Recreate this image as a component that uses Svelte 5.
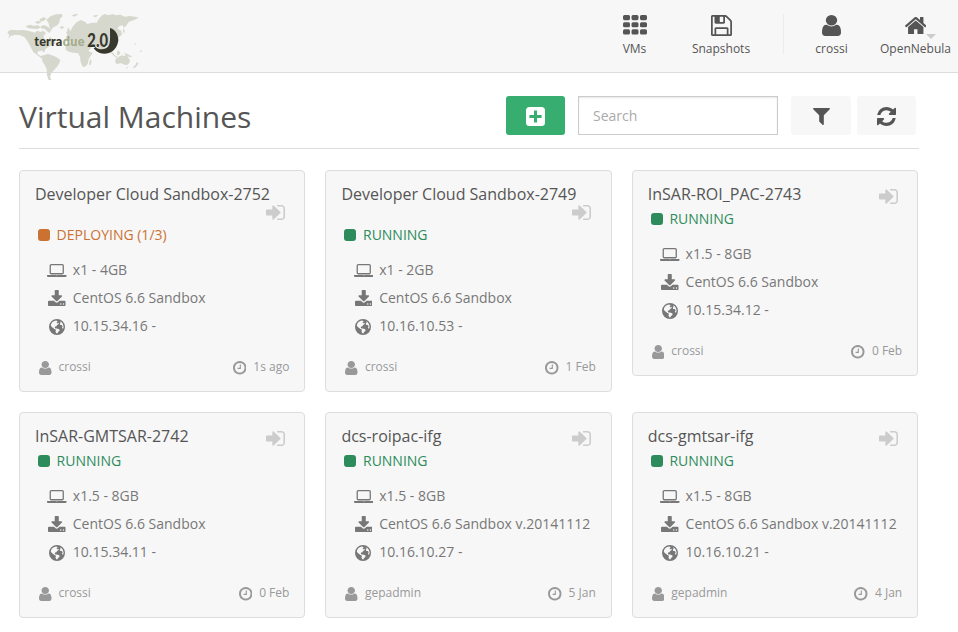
<script>
  const icons = {
    user: {
      box: '256 128 1280 1536',
      d: 'M1536 1399q0 109-62.5 187t-150.5 78h-854q-88 0-150.5-78t-62.5-187q0-85 8.5-160.5t31.5-152 58.5-131 94-89 134.5-34.5q131 128 313 128t313-128q76 0 134.5 34.5t94 89 58.5 131 31.5 152 8.5 160.5zm-256-887q0 159-112.5 271.5t-271.5 112.5-271.5-112.5-112.5-271.5 112.5-271.5 271.5-112.5 271.5 112.5 112.5 271.5z'
    },
    grid: {
      box: '0 0 24 19',
      d: 'M1.5 0h4q1.500 0 1.500 1.500v2q0 1.500-1.500 1.500h-4q-1.500 0-1.500-1.500v-2q0-1.500 1.500-1.500zM10 0h4q1.500 0 1.500 1.500v2q0 1.500-1.500 1.500h-4q-1.500 0-1.500-1.500v-2q0-1.500 1.500-1.500zM18.500 0h4q1.500 0 1.500 1.500v2q0 1.500-1.500 1.500h-4q-1.500 0-1.500-1.500v-2q0-1.500 1.500-1.500zM1.500 7h4q1.500 0 1.500 1.500v2q0 1.500-1.500 1.500h-4q-1.500 0-1.500-1.500v-2q0-1.500 1.500-1.500zM10 7h4q1.500 0 1.500 1.500v2q0 1.500-1.500 1.500h-4q-1.500 0-1.500-1.500v-2q0-1.500 1.500-1.500zM18.500 7h4q1.500 0 1.500 1.500v2q0 1.500-1.500 1.500h-4q-1.500 0-1.500-1.500v-2q0-1.500 1.500-1.500zM1.500 14h4q1.500 0 1.500 1.500v2q0 1.500-1.500 1.500h-4q-1.500 0-1.500-1.500v-2q0-1.500 1.500-1.500zM10 14h4q1.500 0 1.500 1.500v2q0 1.500-1.500 1.500h-4q-1.500 0-1.500-1.500v-2q0-1.500 1.500-1.500zM18.500 14h4q1.500 0 1.500 1.500v2q0 1.500-1.500 1.500h-4q-1.500 0-1.500-1.500v-2q0-1.500 1.500-1.500z'
    },
    save: {
      box: '128 128 1536 1536',
      d: 'M512 1536h768v-384h-768v384zm896 0h128v-896q0-14-10-38.5t-20-34.5l-281-281q-10-10-34-20t-39-10v416q0 40-28 68t-68 28h-576q-40 0-68-28t-28-68v-416h-128v1280h128v-416q0-40 28-68t68-28h832q40 0 68 28t28 68v416zm-384-928v-320q0-13-9.5-22.5t-22.5-9.5h-192q-13 0-22.5 9.5t-9.5 22.5v320q0 13 9.5 22.5t22.5 9.5h192q13 0 22.5-9.500t9.500-22.500zm640 32v928q0 40-28 68t-68 28h-1344q-40 0-68-28t-28-68v-1344q0-40 28-68t68-28h928q40 0 88 20t76 48l280 280q28 28 48 76t20 88z'
    },
    home: {
      box: '89 256 1614 1280',
      d: 'M1472 992v480q0 26-19 45t-45 19h-384v-384h-256v384h-384q-26 0-45-19t-19-45v-480q0-1 .5-3t.5-3l575-474 575 474q1 2 1 6zm223-69l-62 74q-8 9-21 11h-3q-13 0-21-7l-692-577-692 577q-12 8-24 7-13-2-21-11l-62-74q-8-10-7-23.5t11-21.5l719-599q32-26 76-26t76 26l244 204v-195q0-14 9-23t23-9h192q14 0 23 9t9 23v408l219 182q10 8 11 21.5t-7 23.5z'
    },
    plus: {
      box: '0 0 19 19',
      d: 'M3.500 0h12q3.500 0 3.500 3.500v12q0 3.500-3.500 3.500h-12q-3.500 0-3.500-3.500v-12q0-3.500 3.500-3.500zM8 3.400v4.600h-4.600v3h4.600v4.600h3v-4.600h4.600v-3h-4.600v-4.600z'
    },
    filter: {
      box: '191 256 1410 1408',
      d: 'M1595 295q17 41-14 70l-493 493v742q0 42-39 59-13 5-25 5-27 0-45-19l-256-256q-19-19-19-45v-486l-493-493q-31-29-14-70 17-39 59-39h1280q42 0 59 39z'
    },
    refresh: {
      box: '128 128 1536 1536',
      d: 'M1639 1056q0 5-1 7-64 268-268 434.500t-478 166.500q-146 0-282.500-55t-243.500-157l-129 129q-19 19-45 19t-45-19-19-45v-448q0-26 19-45t45-19h448q26 0 45 19t19 45-19 45l-137 137q71 66 161 102t187 36q134 0 250-65t186-179q11-17 53-117 8-23 30-23h192q13 0 22.500 9.500t9.500 22.500zm25-800v448q0 26-19 45t-45 19h-448q-26 0-45-19t-19-45 19-45l138-138q-148-137-349-137-134 0-250 65t-186 179q-11 17-53 117-8 23-30 23h-199q-13 0-22.500-9.500t-9.500-22.500v-7q65-268 270-434.500t480-166.500q146 0 284 55.500t245 156.500l130-129q19-19 45-19t45 19 19 45z'
    },
    signin: {
      box: '128 256 1536 1280',
      d: 'M1312 896q0 26-19 45l-544 544q-19 19-45 19t-45-19-19-45v-288h-448q-26 0-45-19t-19-45v-384q0-26 19-45t45-19h448v-288q0-26 19-45t45-19 45 19l544 544q19 19 19 45zm352-352v704q0 119-84.500 203.500t-203.500 84.500h-320q-13 0-22.500-9.500t-9.500-22.500q0-4-1-20t-.5-26.500 3-23.500 10-19.500 20.500-6.500h320q66 0 113-47t47-113v-704q0-66-47-113t-113-47h-312l-11.500-1-11.500-3-8-5.500-7-9-2-13.500q0-4-1-20t-.5-26.500 3-23.500 10-19.500 20.500-6.500h320q119 0 203.500 84.500t84.500 203.500z'
    },
    laptop: {
      box: '0 256 1920 1280',
      d: 'M416 1280q-66 0-113-47t-47-113v-704q0-66 47-113t113-47h1088q66 0 113 47t47 113v704q0 66-47 113t-113 47h-1088zm-32-864v704q0 13 9.500 22.500t22.500 9.500h1088q13 0 22.500-9.500t9.500-22.500v-704q0-13-9.500-22.500t-22.500-9.500h-1088q-13 0-22.500 9.500t-9.500 22.500zm1376 928h160v96q0 40-47 68t-113 28h-1600q-66 0-113-28t-47-68v-96h1760zm-720 96q16 0 16-16t-16-16h-160q-16 0-16 16t16 16h160z'
    },
    download: {
      box: '64 0 1664 1536',
      d: 'M1344 1344q0-26-19-45t-45-19-45 19-19 45 19 45 45 19 45-19 19-45zm256 0q0-26-19-45t-45-19-45 19-19 45 19 45 45 19 45-19 19-45zm128-224v320q0 40-28 68t-68 28h-1472q-40 0-68-28t-28-68v-320q0-40 28-68t68-28h465l135 136q58 56 136 56t136-56l136-136h464q40 0 68 28t28 68zm-325-569q17 41-14 70l-448 448q-18 19-45 19t-45-19l-448-448q-31-29-14-70 17-39 59-39h256v-448q0-26 19-45t45-19h256q26 0 45 19t19 45v448h256q42 0 59 39z'
    },
    globe: {
      box: '0 0 16 16',
      d: 'M8 0A8 8 0 1 1 8 16A8 8 0 1 1 8 0zM7.300 1.400L5.200 2.100 3.200 3.300 2 5.200 1.900 6.800 3 8.300 4.300 8.900 5.200 10.100 6.400 10.300 6.900 11.500 6.400 12.600 7.400 14.300 8.300 14.500 9.100 13.100 10.400 12 10.500 10.600 8.900 9.800 7.500 9.400 6.400 9.600 5.700 8.600 6.200 7.500 7.500 7.300 7.900 6.200 9.200 5.200 10 4.300 9 3.800 8.300 4.600 7.500 3.800 8.700 2.600zM11.200 2.300L11.600 3.600 10.800 5 11.300 6.100 12.800 5.900 13.700 7.200 13 8.600 13.500 9.700 14.300 9.300 14.600 7.500 13.900 5.100 12.700 3.300z'
    },
    clock: {
      box: '128 128 1536 1536',
      d: 'M1024 544v448q0 14-9 23t-23 9h-320q-14 0-23-9t-9-23v-64q0-14 9-23t23-9h224v-352q0-14 9-23t23-9h64q14 0 23 9t9 23zm416 352q0-148-73-273t-198-198-273-73-273 73-198 198-73 273 73 273 198 198 273 73 273-73 198-198 73-273zm224 0q0 209-103 385.500t-279.500 279.500-385.500 103-385.500-103-279.500-279.500-103-385.500 103-385.500 279.500-279.500 385.500-103 385.500 103 279.500 279.500 103 385.500z'
    }
  };

  const machines = [
    { name: 'Developer Cloud Sandbox-2752', state: 'DEPLOYING (1/3)', busy: true, size: 'x1 - 4GB', image: 'CentOS 6.6 Sandbox', ip: '10.15.34.16 -', owner: 'crossi', age: '1s ago' },
    { name: 'Developer Cloud Sandbox-2749', state: 'RUNNING', size: 'x1 - 2GB', image: 'CentOS 6.6 Sandbox', ip: '10.16.10.53 -', owner: 'crossi', age: '1 Feb' },
    { name: 'InSAR-ROI_PAC-2743', state: 'RUNNING', size: 'x1.5 - 8GB', image: 'CentOS 6.6 Sandbox', ip: '10.15.34.12 -', owner: 'crossi', age: '0 Feb' },
    { name: 'InSAR-GMTSAR-2742', state: 'RUNNING', size: 'x1.5 - 8GB', image: 'CentOS 6.6 Sandbox', ip: '10.15.34.11 -', owner: 'crossi', age: '0 Feb' },
    { name: 'dcs-roipac-ifg', state: 'RUNNING', size: 'x1.5 - 8GB', image: 'CentOS 6.6 Sandbox v.20141112', ip: '10.16.10.27 -', owner: 'gepadmin', age: '5 Jan' },
    { name: 'dcs-gmtsar-ifg', state: 'RUNNING', size: 'x1.5 - 8GB', image: 'CentOS 6.6 Sandbox v.20141112', ip: '10.16.10.21 -', owner: 'gepadmin', age: '4 Jan' }
  ];
</script>

{#snippet icon(name, w, h)}
  <svg class="icon" width={w} height={h} viewBox={icons[name].box} preserveAspectRatio="none" aria-hidden="true">
    <path d={icons[name].d} fill="currentColor" fill-rule={name === 'plus' || name === 'globe' ? 'evenodd' : 'nonzero'} />
  </svg>
{/snippet}

<header>
  <a class="logo" href="#home" aria-label="terradue 2.0">
    <svg width="160" height="90" viewBox="0 0 480 270">
      <defs>
        <pattern id="dots" width="6" height="6" patternUnits="userSpaceOnUse">
          <rect width="6" height="6" fill="#dcded5" />
          <rect x="1" y="1" width="4" height="4" fill="#d0d2c7" />
        </pattern>
      </defs>
      <g fill="url(#dots)">
        <path d="M22 96L32 89 52 91 70 90 90 94 104 98 112 92 122 96 130 92 138 100 130 108 134 118 144 120 150 110 160 120 166 130 156 134 146 140 136 148 132 158 126 152 114 154 112 162 122 168 130 166 136 176 126 176 112 166 100 156 92 142 84 126 74 112 60 106 46 104 32 108 24 116 28 106z" />
        <path d="M76 79l14-5 12 3 12-1 8 5-8 6-15-1-13-1zM104 66l12-4 8 5-10 5zM118 58l12-6 10 3-8 7-10 3zM122 79l10-4 12 6 10 9-5 9-9-6-5-6-12-2z" />
        <path d="M139 60L152 48 168 43 186 42 188 48 180 56 178 68 170 77 160 82 154 90 148 82 146 70zM178 81l10-2 5 4-8 4z" />
        <path d="M130 166L144 162 156 166 170 172 181 180 178 190 170 202 160 212 154 220 150 230 154 240 146 240 141 226 140 208 134 194 126 182z" />
        <path d="M197 115L202 104 198 96 212 92 218 80 228 68 242 60 256 66 262 72 276 68 290 68 296 58 306 46 316 42 324 46 340 42 346 46 362 44 374 50 390 48 404 50 416 52 408 58 396 62 386 66 380 76 372 84 368 76 358 78 352 86 364 92 366 104 356 112 358 122 350 132 340 140 336 152 332 158 328 146 320 136 312 150 306 162 298 148 288 134 278 134 272 146 262 152 254 138 244 132 230 126 222 130 214 124 204 124z" />
        <path d="M196 142L206 128 222 126 240 132 256 134 262 146 270 156 278 158 272 168 266 178 264 190 256 200 248 200 242 186 240 170 234 160 220 158 208 156 198 150zM270 178l5 4-3 13-5-1z" />
        <path d="M202 88l4-5 4 7-3 7-6 1zM215 46l15-5 4 3-12 6zM278 48l12-4 4 3-9 5zM335 154l10 12 8 5-4 2-10-7-7-8zM353 150l8 7-4 9-7-2zM370 84l4 7-2 10-3-6zM371 157l11 5 10 5 5 5-9-1-11-6z" />
        <path d="M346 178L356 170 366 166 374 168 380 162 384 171 390 181 388 189 380 196 370 193 362 189 350 193 346 186zM378 202l6 0-2 4zM410 186l6 5-8 9-5 5-4-3 8-8zM402 132l5-2 1 4zM422 151l4 1-1 5-4-1z" />
      </g>
      <path d="M330 84C348 89 357 108 354 126C350 149 332 161 313 161C298 161 287 154 281 145L287 141C296 150 316 151 325 139C332 129 330 108 330 84z" fill="#38382d" />
      <g class="brand">
        <text x="103" y="138" textLength="84">terra</text>
        <text x="188" y="138" textLength="66" class="due">due</text>
      </g>
      <text class="version" x="262" y="140" textLength="62" lengthAdjust="spacingAndGlyphs">2.0</text>
    </svg>
  </a>
  <nav>
    <a class="item vms" href="#vms"><span class="glyph">{@render icon('grid', 24, 19.500)}</span>VMs</a>
    <a class="item snaps" href="#snapshots"><span class="glyph">{@render icon('save', 21, 21)}</span>Snapshots</a>
    <i class="divider"></i>
    <a class="item account" href="#user"><span class="glyph">{@render icon('user', 19, 21)}</span>crossi</a>
    <a class="item zone" href="#zone"><span class="glyph">{@render icon('home', 21.500, 17.500)}<i class="caret"></i></span>OpenNebula</a>
  </nav>
</header>

<main>
  <div class="toolbar">
    <h1>Virtual Machines</h1>
    <button class="add" aria-label="Create">{@render icon('plus', 19, 19)}</button>
    <input type="text" placeholder="Search" />
    <button class="filter" aria-label="Filter">{@render icon('filter', 17, 17)}</button>
    <button class="reload" aria-label="Refresh">{@render icon('refresh', 19, 19)}</button>
  </div>

  <section class="cards">
    {#each machines as vm}
      <article>
        <div class="head">
          <h2>{vm.name}</h2>
          <span class="enter">{@render icon('signin', 19, 15)}</span>
        </div>
        <div class="state" class:busy={vm.busy}><i></i>{vm.state}</div>
        <ul>
          <li><span class="laptop">{@render icon('laptop', 19.500, 13)}</span>{vm.size}</li>
          <li><span class="image">{@render icon('download', 17.500, 16)}</span>{vm.image}</li>
          <li><span class="net">{@render icon('globe', 16, 16)}</span>{vm.ip}</li>
        </ul>
        <footer>
          <span class="who">{@render icon('user', 12.500, 14)}</span>{vm.owner}
          <span class="when">{@render icon('clock', 13.500, 13.500)}</span>{vm.age}
        </footer>
      </article>
    {/each}
  </section>
</main>

<style>
  :global(body) {
    background: #fff;
    font-family: 'Open Sans', 'Noto Sans', sans-serif;
    color: #555;
  }
  .icon {
    display: block;
    flex: none;
  }
  header {
    display: flex;
    justify-content: space-between;
    box-sizing: border-box;
    height: 73px;
    padding-right: 6.500px;
    background: #f7f7f7;
    border-bottom: 1px solid #ddd;
  }
  .logo {
    width: 160px;
    height: 90px;
  }
  .logo svg {
    display: block;
  }
  .brand {
    font: 900 38px Lato, sans-serif;
    fill: #38382d;
  }
  .due {
    fill: #a3ab88;
  }
  .version {
    font: 900 57px Lato, sans-serif;
    fill: #38382d;
  }
  nav {
    display: flex;
  }
  .item {
    display: flex;
    flex-direction: column;
    align-items: center;
    padding-top: 15px;
    font-size: 12px;
    line-height: 16px;
    color: #555;
    text-decoration: none;
  }
  .glyph {
    position: relative;
    display: flex;
    align-items: flex-start;
    height: 26px;
  }
  .vms { width: 60px; }
  .snaps { width: 113px; }
  .account { width: 96px; }
  .zone { width: 72px; }
  .zone .glyph {
    box-sizing: border-box;
    padding-top: 1.500px;
  }
  .divider {
    width: 1px;
    height: 40px;
    margin: 14px 0 0 5px;
    background: #ececec;
  }
  .caret {
    position: absolute;
    left: 21px;
    top: 19px;
    border: 5px solid transparent;
    border-top-color: #ccc;
    border-bottom: 0;
  }
  main {
    width: 900px;
    margin-left: 19px;
  }
  .toolbar {
    display: flex;
    align-items: flex-start;
    box-sizing: border-box;
    height: 76px;
    padding: 23px 3px 0 0;
    border-bottom: 1px solid #ddd;
  }
  h1 {
    flex: 1;
    margin: 0;
    font-size: 30px;
    font-weight: 400;
    line-height: 42px;
  }
  button {
    display: flex;
    align-items: center;
    justify-content: center;
    height: 39px;
    padding: 2px 0 0;
    border: 0;
    border-radius: 3px;
    background: #f7f7f7;
    color: #555;
  }
  .add {
    width: 59px;
    background: #37ad6f;
    color: #fff;
  }
  .filter {
    width: 60px;
    margin-right: 6px;
  }
  .reload {
    width: 59px;
  }
  input {
    box-sizing: border-box;
    width: 200px;
    height: 39px;
    margin: 0 13px;
    padding: 0 14px;
    border: 1px solid #ccc;
    box-shadow: inset 0 1px 2px rgba(0, 0, 0, 0.1);
    font: 14px 'Open Sans', sans-serif;
    color: #555;
  }
  input::placeholder {
    color: #aaa;
  }
  .cards {
    display: grid;
    grid-template-columns: repeat(3, 286.400px);
    gap: 20px;
    align-items: start;
    padding-top: 21px;
  }
  article {
    box-sizing: border-box;
    padding: 10px 15px 14px;
    border: 1px solid #ddd;
    border-radius: 4px;
    background: #f7f7f7;
  }
  .head {
    display: flex;
    flex-wrap: wrap;
    align-items: flex-end;
    column-gap: 6px;
  }
  h2 {
    margin: 0;
    font-size: 16px;
    font-weight: 400;
    line-height: 26px;
  }
  .enter {
    height: 18px;
    margin: -2px 4.500px 0 auto;
    color: #ccc;
  }
  .state {
    display: flex;
    align-items: center;
    padding-left: 3px;
    font-size: 14px;
    line-height: 24px;
    color: #2e8b5b;
  }
  .state i {
    width: 12px;
    height: 12px;
    margin-right: 6.600px;
    border-radius: 3px;
    background: currentColor;
  }
  .busy {
    color: #cb7233;
  }
  ul {
    margin: 9px 0 0;
    padding: 0 0 0 12px;
    list-style: none;
  }
  li {
    display: flex;
    align-items: center;
    font-size: 14px;
    line-height: 28px;
    color: #777;
  }
  li span {
    display: flex;
    justify-content: center;
    width: 20px;
    margin-right: 5.800px;
  }
  .net {
    padding-top: 2px;
  }
  .laptop {
    padding-top: 1px;
  }
  footer {
    display: flex;
    align-items: center;
    margin-top: 17px;
    padding-left: 4px;
    font-size: 12px;
    line-height: 20px;
    color: #999;
  }
  .who {
    margin-right: 7px;
    padding-top: 2px;
  }
  .when {
    margin: 0 7px 0 auto;
    padding-top: 2px;
  }
</style>
